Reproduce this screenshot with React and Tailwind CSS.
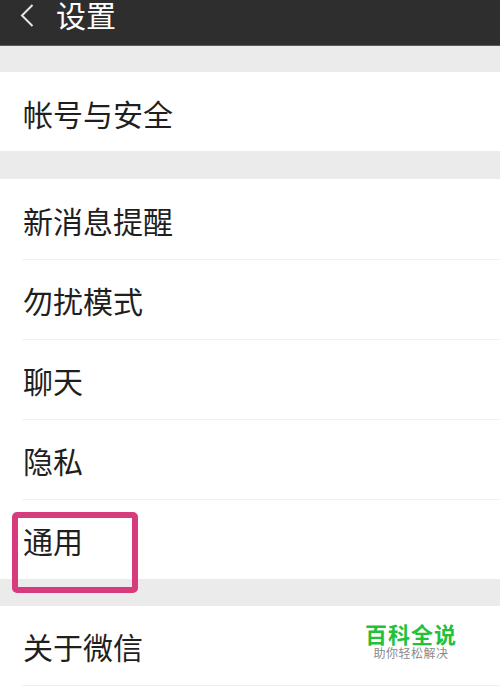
export default function App() {
  const group = ["新消息提醒", "勿扰模式", "聊天", "隐私", "通用"];

  return (
    <div
      className="relative w-[500px] h-[693px] overflow-hidden bg-[#ebebeb]"
      style={{ fontFamily: '"Noto Sans CJK SC", "Noto Sans", sans-serif' }}
    >
      <div className="h-[46px] bg-[#2e2e2e] border-b border-[#5a5a5a]">
        <div className="flex items-center h-[28px] pl-[20px]">
          <svg width="14" height="24" viewBox="0 0 14 24" className="mt-[1px]">
            <path d="M12.5 2 L2 12.5 L12.5 23" fill="none" stroke="#e6e6e6" strokeWidth="2" />
          </svg>
          <span className="ml-[22px] text-[30px] leading-[28px] text-white">设置</span>
        </div>
      </div>

      <div className="h-[26px]" />

      <div className="bg-white h-[79px] flex items-center pl-[23px] pt-[3px]">
        <span className="text-[30px] leading-none text-[#1f1f1f]">帐号与安全</span>
      </div>

      <div className="h-[28px]" />

      <div className="bg-white">
        {group.map((label, i) => (
          <div key={label} className={i ? "ml-[22px] border-t border-[#f0f0f0]" : ""}>
            <div
              className={
                "flex items-center pt-[1px] text-[30px] leading-none text-[#1f1f1f] " +
                (i ? "h-[79px]" : "pl-[23px] h-[80px]")
              }
            >
              <span className={i ? "ml-[1px]" : ""}>{label}</span>
            </div>
          </div>
        ))}
      </div>

      <div className="h-[27px]" />

      <div className="bg-white h-[100px]">
        <div className="h-[79px] flex items-center pl-[23px] pt-[1px]">
          <span className="text-[30px] leading-none text-[#1f1f1f]">关于微信</span>
        </div>
        <div className="ml-[22px] border-t border-[#f0f0f0]" />
      </div>

      <div className="absolute left-[12px] top-[512px] w-[126px] h-[81px] border-[6px] border-[#d63b7b] rounded-[5px]" />

      <div className="absolute left-[362px] top-[622px] w-[98px] flex flex-col items-center gap-[2px]">
        <span className="text-[22px] leading-[22px] font-bold text-[#1fc23a] tracking-[1px]">百科全说</span>
        <span className="text-[12px] leading-[14px] text-[#8a8a8a] tracking-[0.5px]">助你轻松解决</span>
      </div>
    </div>
  );
}
